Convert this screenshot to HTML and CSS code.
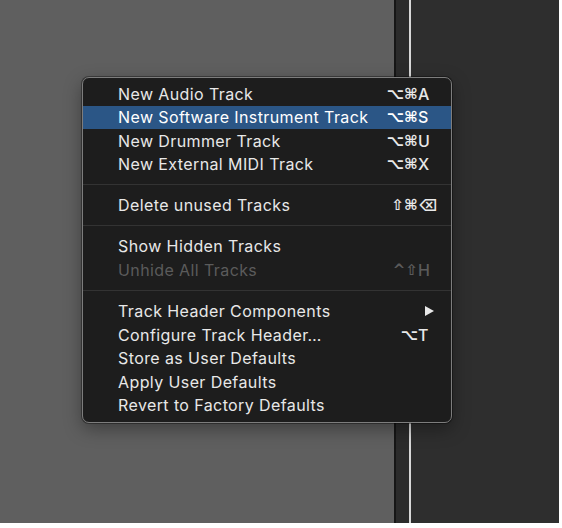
FILE: index.html
```html
<!DOCTYPE html>
<html>
<head>
<meta charset="utf-8">
<link rel="stylesheet" href="styles.css">
</head>
<body>
<div class="screen">
  <div class="pane-left"></div>
  <div class="divider"></div>
  <div class="strip"></div>
  <div class="playhead"></div>
  <div class="pane-right"></div>

  <div class="menu">
    <div class="item"><span class="label">New Audio Track</span><span class="keys"><span class="mods">⌥⌘</span><span class="key">A</span></span></div>
    <div class="item selected"><span class="label">New Software Instrument Track</span><span class="keys"><span class="mods">⌥⌘</span><span class="key">S</span></span></div>
    <div class="item"><span class="label">New Drummer Track</span><span class="keys"><span class="mods">⌥⌘</span><span class="key">U</span></span></div>
    <div class="item"><span class="label">New External MIDI Track</span><span class="keys"><span class="mods">⌥⌘</span><span class="key">X</span></span></div>
    <div class="sep"></div>
    <div class="item"><span class="label">Delete unused Tracks</span><span class="keys"><span class="mods">⇧⌘</span><span class="key">⌫</span></span></div>
    <div class="sep"></div>
    <div class="item"><span class="label">Show Hidden Tracks</span></div>
    <div class="item disabled"><span class="label">Unhide All Tracks</span><span class="keys"><span class="mods">^⇧</span><span class="key">H</span></span></div>
    <div class="sep"></div>
    <div class="item"><span class="label">Track Header Components</span><span class="keys"><span class="arrow"></span></span></div>
    <div class="item"><span class="label">Configure Track Header…</span><span class="keys"><span class="mods">⌥</span><span class="key">T</span></span></div>
    <div class="item"><span class="label">Store as User Defaults</span></div>
    <div class="item"><span class="label">Apply User Defaults</span></div>
    <div class="item"><span class="label">Revert to Factory Defaults</span></div>
  </div>
</div>
</body>
</html>
```
FILE: styles.css
```css
html, body {
  margin: 0;
  padding: 0;
  background: #ffffff;
}
.screen {
  position: relative;
  width: 559px;
  height: 523px;
  display: flex;
  overflow: hidden;
}
.pane-left {
  width: 394px;
  background: #5f5f5f;
}
.divider {
  width: 2px;
  background: #161616;
}
.strip {
  width: 13px;
  background: #2b2b2b;
}
.playhead {
  width: 2px;
  background: #d8d8d8;
}
.pane-right {
  flex: 1;
  background: #2e2e2e;
}
.menu {
  position: absolute;
  left: 82px;
  top: 77px;
  width: 368px;
  padding: 4px 0 5px;
  background: #1d1d1d;
  border: 1px solid #7d7d7d;
  border-radius: 7px;
  box-shadow: 0 0 0 1px rgba(0,0,0,0.35), 0 6px 18px rgba(0,0,0,0.35);
  font-family: "Inter", "DejaVu Sans", sans-serif;
  font-size: 16px;
  letter-spacing: 0.4px;
  color: #e8e8e8;
}
.item {
  height: 23.5px;
  display: flex;
  align-items: center;
  justify-content: space-between;
  padding: 0 19px 0 35px;
}
.item.selected {
  background: #2b5686;
  color: #ffffff;
}
.item.disabled {
  color: #5b5b5b;
}
.keys {
  display: flex;
  align-items: center;
}
.mods {
  font-family: "DejaVu Sans", sans-serif;
  font-size: 15px;
  font-weight: bold;
  letter-spacing: 0;
}
.key {
  width: 14px;
  text-align: left;
  font-weight: 500;
}
.arrow {
  width: 0;
  height: 0;
  border-top: 5px solid transparent;
  border-bottom: 5px solid transparent;
  border-left: 9px solid #e8e8e8;
  margin-right: -2px;
}
.sep {
  height: 1px;
  margin: 8.3px 0;
  background: #333333;
}
```
